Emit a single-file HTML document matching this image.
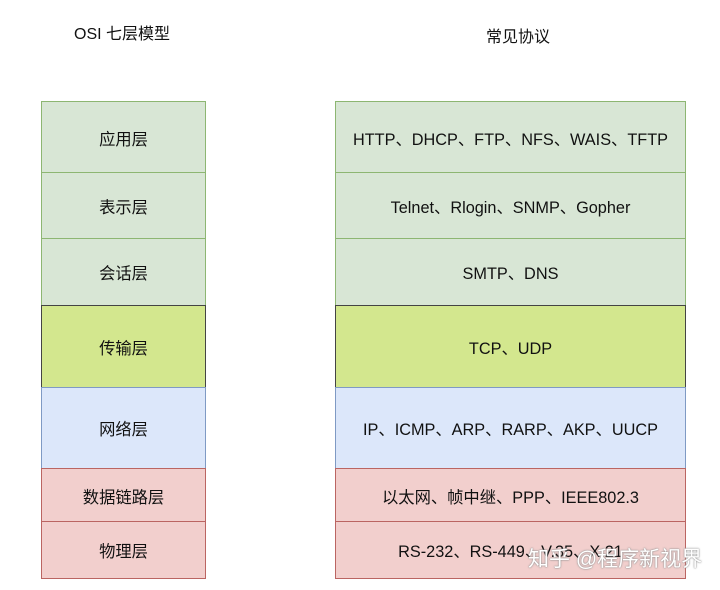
<!DOCTYPE html>
<html><head><meta charset="utf-8"><style>
body{margin:0;width:720px;height:590px;background:#fff;position:relative;overflow:hidden;font-family:"Liberation Sans","Noto Sans CJK SC",sans-serif;color:#111}
.b{position:absolute;box-sizing:border-box;display:flex;align-items:center;justify-content:center;font-size:16.3px;border:1.5px solid}
.g{background:#d8e6d5;border-color:#8db672}
.t{background:#d3e78e;border-color:#444}
.bl{background:#dce7fa;border-color:#7f9ac4}
.r{background:#f2cfcd;border-color:#bb6562}
.h{position:absolute;font-size:16px}
.wm{position:absolute;left:528px;top:543px;font-size:21px;color:#fff;text-shadow:0 0 2px #999,0 0 1px #777}
</style></head><body>
<div class="h" style="left:74px;top:20px">OSI 七层模型</div>
<div class="h" style="left:486px;top:23px">常见协议</div>

<div class="b g" style="left:41px;top:101px;width:165px;height:73px">应用层</div>
<div class="b g" style="left:41px;top:172px;width:165px;height:67px">表示层</div>
<div class="b g" style="left:41px;top:238px;width:165px;height:68px">会话层</div>
<div class="b t" style="left:41px;top:305px;width:165px;height:83px">传输层</div>
<div class="b bl" style="left:41px;top:387px;width:165px;height:82px">网络层</div>
<div class="b r" style="left:41px;top:468px;width:165px;height:55px">数据链路层</div>
<div class="b r" style="left:41px;top:521px;width:165px;height:58px">物理层</div>

<div class="b g" style="left:335px;top:101px;width:351px;height:73px">HTTP、DHCP、FTP、NFS、WAIS、TFTP</div>
<div class="b g" style="left:335px;top:172px;width:351px;height:67px">Telnet、Rlogin、SNMP、Gopher</div>
<div class="b g" style="left:335px;top:238px;width:351px;height:68px">SMTP、DNS</div>
<div class="b t" style="left:335px;top:305px;width:351px;height:83px">TCP、UDP</div>
<div class="b bl" style="left:335px;top:387px;width:351px;height:82px">IP、ICMP、ARP、RARP、AKP、UUCP</div>
<div class="b r" style="left:335px;top:468px;width:351px;height:55px">以太网、帧中继、PPP、IEEE802.3</div>
<div class="b r" style="left:335px;top:521px;width:351px;height:58px">RS-232、RS-449、V.35、X.21</div>
<div class="wm">知乎 @程序新视界</div>
</body></html>
